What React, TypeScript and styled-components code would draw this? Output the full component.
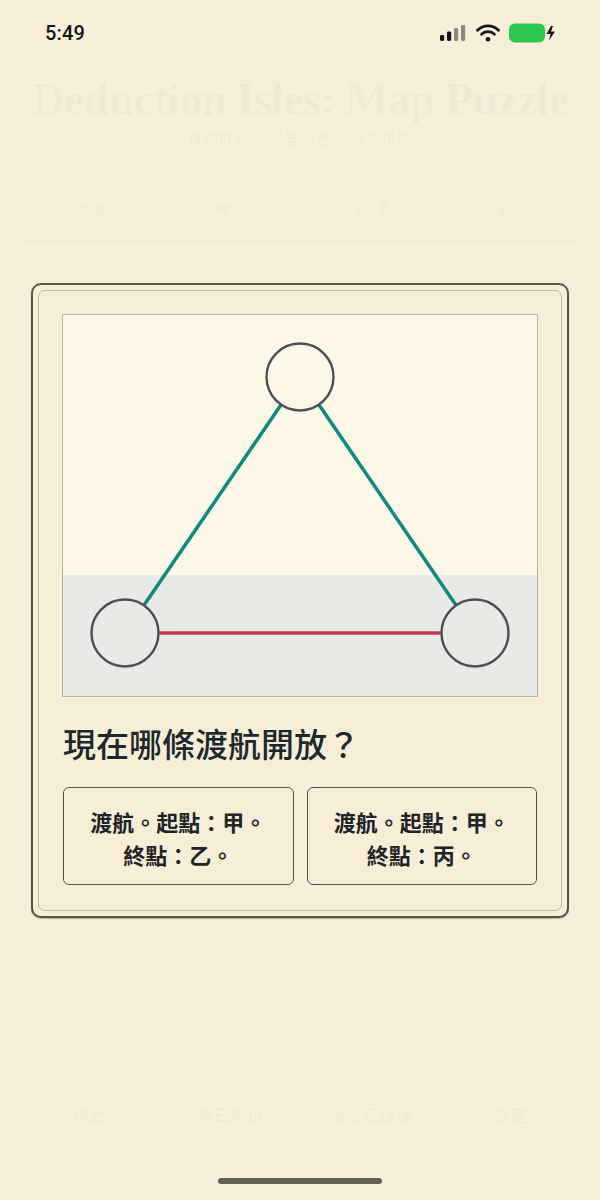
import React from "react";
import styled, { createGlobalStyle } from "styled-components";

const Global = createGlobalStyle`
  html, body { margin: 0; padding: 0; background: #f8efda; }
  * { box-sizing: border-box; }
`;

const Screen = styled.div`
  position: relative;
  width: 600px;
  height: 1200px;
  overflow: hidden;
  background: #f8efda;
  font-family: "Noto Sans CJK TC", "Noto Sans", sans-serif;
  display: flex;
  flex-direction: column;
`;

const StatusBar = styled.div`
  height: 66px;
  display: flex;
  align-items: center;
  justify-content: space-between;
  padding: 0 43px 0 45px;
`;

const Time = styled.span`
  font-family: Roboto, "Liberation Sans", sans-serif;
  font-size: 20px;
  font-weight: 500;
  color: #141414;
  letter-spacing: 0.2px;
`;

const StatusIcons = styled.div`
  display: flex;
  align-items: center;
  gap: 9px;
`;

const Backdrop = styled.div`
  flex: 1;
  display: flex;
  flex-direction: column;
  align-items: center;
  padding: 6px 20px 0;
  color: rgba(70, 55, 30, 0.03);
`;

const FaintTitle = styled.div`
  font-family: "Liberation Serif", serif;
  font-weight: 700;
  font-size: 46px;
  line-height: 56px;
  white-space: nowrap;
  letter-spacing: -0.8px;
`;

const FaintSub = styled.div`
  font-size: 15px;
  font-weight: 700;
  line-height: 20px;
`;

const FaintTabs = styled.div`
  width: 100%;
  display: grid;
  grid-template-columns: repeat(4, 1fr);
  margin-top: 50px;
  font-size: 14px;
  font-weight: 700;
  text-align: center;
  border-bottom: 2px solid rgba(70, 55, 30, 0.025);
  padding-bottom: 22px;
`;

const Spacer = styled.div`
  flex: 1;
`;

const FaintNav = styled.div`
  width: 100%;
  display: grid;
  grid-template-columns: repeat(4, 1fr);
  height: 72px;
  align-items: center;
  text-align: center;
  font-size: 17px;
  font-weight: 700;
  margin-bottom: 50px;
`;

const HomeBar = styled.div`
  position: absolute;
  left: 218px;
  bottom: 16px;
  width: 164px;
  height: 6px;
  border-radius: 3px;
  background: #646152;
`;

const Overlay = styled.div`
  position: absolute;
  inset: 0;
  display: flex;
  align-items: center;
  justify-content: center;
`;

const Modal = styled.div`
  width: 538px;
  border: 2px solid #545552;
  border-radius: 10px;
  background: #f7eed8;
  padding: 5px;
  box-shadow: 0 1px 1px rgba(40, 40, 30, 0.35);
`;

const ModalInner = styled.div`
  border: 1px solid #c2baa7;
  border-radius: 7px;
  padding: 23px 23px 25px;
  display: flex;
  flex-direction: column;
`;

const MapFrame = styled.div`
  width: 476px;
  height: 383px;
  border: 1px solid #b6b3a9;
  background: #fdf8e8;
  display: flex;
`;

const Question = styled.h2`
  margin: 25px 0 0 1px;
  font-family: "Noto Sans CJK TC", sans-serif;
  font-size: 33px;
  line-height: 43px;
  font-weight: 500;
  color: #1d282b;
`;

const Options = styled.div`
  margin-top: 22px;
  display: grid;
  grid-template-columns: 1fr 1fr;
  gap: 13px;
  padding: 0 1px;
`;

const OptionButton = styled.button`
  height: 98px;
  border: 1.5px solid #4f5150;
  border-radius: 6px;
  background: transparent;
  font-family: "Noto Sans CJK TC", sans-serif;
  font-size: 22px;
  line-height: 33px;
  font-weight: 700;
  color: #1f2527;
  display: flex;
  flex-direction: column;
  align-items: center;
  justify-content: center;
  padding: 4px 0 0;
`;

const Signal = () => (
  <svg width="27" height="16" viewBox="0 0 27 16">
    <rect x="0" y="10" width="4.2" height="6" rx="1.4" fill="#141414" />
    <rect x="7" y="6.5" width="4.2" height="9.5" rx="1.4" fill="#141414" />
    <rect x="14" y="3" width="4.2" height="13" rx="1.4" fill="#8f8878" />
    <rect x="21" y="0" width="4.2" height="16" rx="1.4" fill="#8f8878" />
  </svg>
);

const Wifi = () => (
  <svg width="24" height="18" viewBox="0 0 24 18">
    <path d="M1.5 6.2 A15 15 0 0 1 22.5 6.2" stroke="#141414" strokeWidth="2.8" fill="none" strokeLinecap="round" />
    <path d="M5.5 10.2 A9.5 9.5 0 0 1 18.5 10.2" stroke="#141414" strokeWidth="2.8" fill="none" strokeLinecap="round" />
    <circle cx="12" cy="15.3" r="2.3" fill="#141414" />
  </svg>
);

const Battery = () => (
  <svg width="48" height="20" viewBox="0 0 48 20">
    <rect x="0" y="0.5" width="36" height="19" rx="6" fill="#2ac84f" />
    <path d="M42 3 L37.5 11 L41.5 11 L40 17.5 L46 8.5 L42 8.5 L44 3 Z" fill="#141414" />
  </svg>
);

const MapDrawing = () => (
  <svg width="474" height="381" viewBox="1 1 474 381">
    <rect x="0" y="0" width="476" height="261" fill="#fdf8e8" />
    <rect x="0" y="261" width="476" height="122" fill="#e9eae5" />
    <line x1="238" y1="63" x2="63" y2="319" stroke="#0e8a7c" strokeWidth="3.5" />
    <line x1="238" y1="63" x2="413" y2="319" stroke="#0e8a7c" strokeWidth="3.5" />
    <line x1="63" y1="319" x2="413" y2="319" stroke="#c23a4b" strokeWidth="3.5" />
    <circle cx="238" cy="63" r="33.5" fill="#fdf8e8" stroke="#4b4f55" strokeWidth="2.4" />
    <circle cx="63" cy="319" r="33.5" fill="#e9eae5" stroke="#4b4f55" strokeWidth="2.4" />
    <circle cx="413" cy="319" r="33.5" fill="#e9eae5" stroke="#4b4f55" strokeWidth="2.4" />
  </svg>
);

const options = [
  ["渡航。起點：甲。", "終點：乙。"],
  ["渡航。起點：甲。", "終點：丙。"],
];

export default function App() {
  return (
    <Screen>
      <Global />
      <StatusBar>
        <Time>5:49</Time>
        <StatusIcons>
          <Signal />
          <Wifi />
          <Battery />
        </StatusIcons>
      </StatusBar>
      <Backdrop>
        <FaintTitle>Deduction Isles: Map Puzzle</FaintTitle>
        <FaintSub>推理群島 · 地圖謎題 · 渡航推理</FaintSub>
        <FaintTabs>
          <span>地圖</span>
          <span>線索</span>
          <span>渡航表</span>
          <span>筆記</span>
        </FaintTabs>
        <Spacer />
        <FaintNav>
          <span>地圖</span>
          <span>今日航班</span>
          <span>渡航紀錄簿</span>
          <span>設定</span>
        </FaintNav>
      </Backdrop>
      <Overlay>
        <Modal>
          <ModalInner>
            <MapFrame>
              <MapDrawing />
            </MapFrame>
            <Question>現在哪條渡航開放？</Question>
            <Options>
              {options.map((o, i) => (
                <OptionButton key={i}>
                  <span>{o[0]}</span>
                  <span>{o[1]}</span>
                </OptionButton>
              ))}
            </Options>
          </ModalInner>
        </Modal>
      </Overlay>
      <HomeBar />
    </Screen>
  );
}
